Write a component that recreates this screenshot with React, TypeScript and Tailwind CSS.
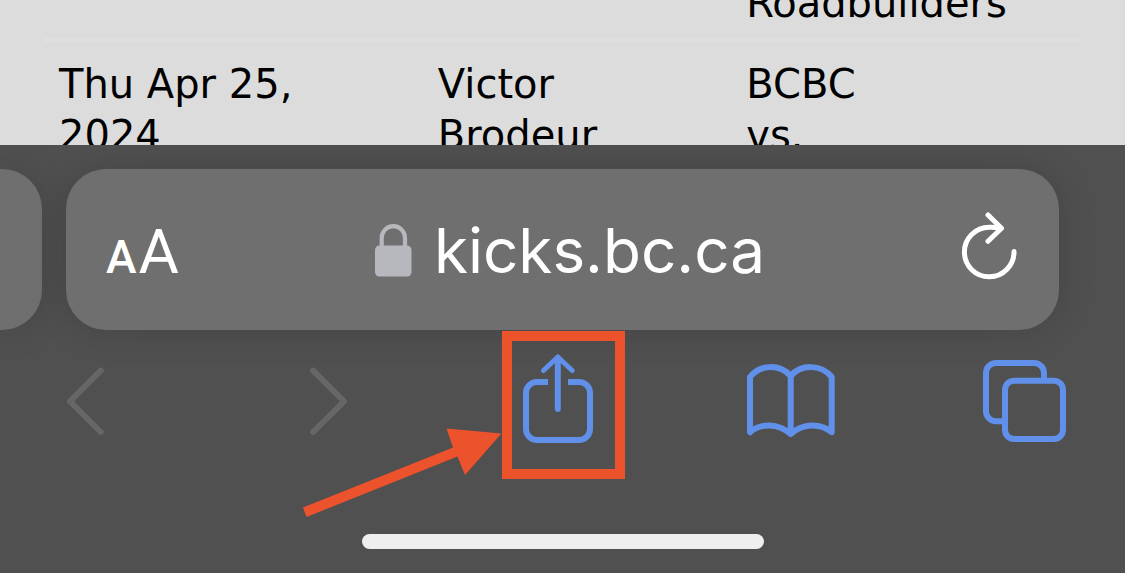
import type { ReactNode } from "react";

// Table rows of the page behind the browser bar
function Cell({ children }: { children?: ReactNode }) {
  return <td className="px-[14px] pt-[17px] pb-[9px] align-top border-b-4 border-[#dee0e2]">{children}</td>;
}

function Schedule() {
  return (
    <div className="h-[145px] overflow-hidden bg-[#dcdcdc] px-[45px]">
      <table className="-mt-[39px] w-full table-fixed border-separate border-spacing-0 text-[40px] leading-[51px] text-black font-['DejaVu_Sans',sans-serif]">
        <colgroup>
          <col className="w-[36.6%]" />
          <col className="w-[29.8%]" />
          <col />
        </colgroup>
        <tbody>
          <tr>
            <Cell />
            <Cell />
            <Cell>Roadbuilders</Cell>
          </tr>
          <tr>
            <Cell>Thu Apr 25,<br />2024</Cell>
            <Cell>Victor<br />Brodeur</Cell>
            <Cell>BCBC<br />vs.</Cell>
          </tr>
        </tbody>
      </table>
    </div>
  );
}

function LockIcon() {
  return (
    <svg width="37" height="53" viewBox="0 0 37 53" className="shrink-0" aria-hidden="true">
      <path d="M6.7 24V14A11.6 11.8 0 0 1 30 14V24" fill="none" stroke="#b7b7be" strokeWidth="4.2" />
      <rect x="0" y="21.5" width="36.5" height="31" rx="4.5" fill="#b7b7be" />
    </svg>
  );
}

function ReloadIcon() {
  return (
    <svg width="56" height="76" viewBox="0 0 56 76" fill="none" stroke="#fff" strokeWidth="5" strokeLinecap="round" strokeLinejoin="round" aria-hidden="true">
      <path d="M53 39.5A24.8 24.8 0 1 1 28.3 15.2Q34 15 40 16.3" />
      <path d="M27 3L40.5 16.3L27 29.3" />
    </svg>
  );
}

function ToolIcon({ width, children }: { width: number; children: ReactNode }) {
  return (
    <svg width={width} height="89" viewBox={`0 0 ${width} 89`} fill="none" stroke="currentColor" strokeWidth="6" strokeLinejoin="round" aria-hidden="true">
      {children}
    </svg>
  );
}

function AddressBar() {
  return (
    <div className="flex gap-6 pt-6 pr-[66px]">
      <div className="w-[42px] shrink-0 rounded-r-[40px] bg-[#6f6f6f] shadow-[0_0_36px_rgba(0,0,0,0.15)]" />
      <div className="flex h-[161px] flex-1 items-center justify-between rounded-[40px] bg-[#6f6f6f] pr-[42px] pl-10 text-white shadow-[0_0_36px_rgba(0,0,0,0.15)]">
        <button type="button" aria-label="Page settings" className="flex items-baseline gap-[2px] pt-1 font-['Roboto',sans-serif]">
          <span className="text-[46px] font-medium">A</span>
          <span className="text-[62px]">A</span>
        </button>
        <button type="button" className="flex items-center gap-[22px] pt-[2px] text-[62px] font-['Inter',sans-serif]">
          <LockIcon />
          <span>kicks.bc.ca</span>
        </button>
        <button type="button" aria-label="Reload">
          <ReloadIcon />
        </button>
      </div>
    </div>
  );
}

function Toolbar() {
  return (
    <nav className="grid grid-cols-[244fr_213fr_224fr_236fr_83fr] justify-items-start pt-6 pl-[66px] pr-[59px] text-[#6090ea]">
      <button type="button" aria-label="Back" className="text-[#666666]">
        <ToolIcon width={38}>
          <path d="M34.7 16.7L4 47.3L34.7 78" strokeLinecap="round" />
        </ToolIcon>
      </button>
      <button type="button" aria-label="Forward" className="text-[#666666]">
        <ToolIcon width={38}>
          <path d="M3.2 16.7L34 47.3L3.2 78" strokeLinecap="round" />
        </ToolIcon>
      </button>
      <div className="relative">
        <button type="button" aria-label="Share" className="block">
          <ToolIcon width={70}>
            <path d="M25 28H14A11 11 0 0 0 3 39V75A11 11 0 0 0 14 86H56A11 11 0 0 0 67 75V39A11 11 0 0 0 56 28H45" />
            <path d="M34.8 4V55" strokeLinecap="round" />
            <path d="M20.5 16.5L34.8 3L49.2 16.5" strokeWidth="5" strokeLinecap="round" />
          </ToolIcon>
        </button>
        {/* callout: frame and arrow around the share button */}
        <span className="pointer-events-none absolute -top-[23px] -right-8 -bottom-9 -left-[21px] border-10 border-[#ec522b]" />
        <svg className="pointer-events-none absolute top-[73px] right-[91px]" width="199" height="91" viewBox="0 0 199 91" fill="#ec522b" aria-hidden="true">
          <path d="M0 80.5L150 20.5L143.5 1.5L198.5 6.5L162 48L154.5 29.5L3.5 90Z" />
        </svg>
      </div>
      <button type="button" aria-label="Bookmarks">
        <ToolIcon width={88}>
          <path d="M3 78.3V23C13 10 33 10 43.7 22C54 10 74 10 84.7 23V78.3C74 69 56 69 43.7 80C31 69 13 69 3 78.3Z" />
          <path d="M43.7 22V80" />
        </ToolIcon>
      </button>
      <button type="button" aria-label="Tabs">
        <ToolIcon width={83}>
          <path d="M20 67.3H13A10 10 0 0 1 3 57.3V19A10 10 0 0 1 13 9H51A10 10 0 0 1 61 19V25" />
          <rect x="22" y="26.7" width="58" height="58.3" rx="9" />
        </ToolIcon>
      </button>
    </nav>
  );
}

export default function App() {
  return (
    <div className="flex min-h-screen flex-col bg-[#505050]">
      <Schedule />
      <div className="flex flex-1 flex-col overflow-hidden">
        <AddressBar />
        <Toolbar />
        <div className="mx-auto mt-auto mb-6 h-[15px] w-[402px] rounded-full bg-[#efefef]" />
      </div>
    </div>
  );
}
